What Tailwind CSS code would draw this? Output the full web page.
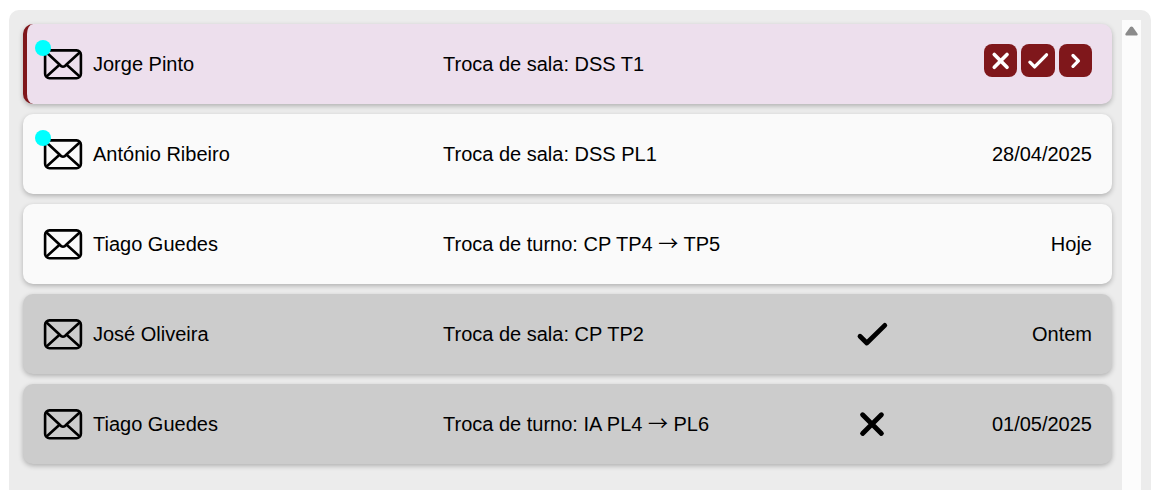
<!DOCTYPE html>
<html lang="pt">
<head>
<meta charset="utf-8">
<meta name="viewport" content="width=device-width, initial-scale=1">
<title>Notificações</title>
<script src="https://cdn.jsdelivr.net/npm/@tailwindcss/browser@4"></script>
</head>
<body class="bg-white text-black text-xl font-['Liberation_Sans',Arial,sans-serif]">
<svg class="hidden" aria-hidden="true">
  <symbol id="mail" viewBox="0 0 40 40">
    <g fill="none" stroke="currentColor" stroke-width="2.6" stroke-linejoin="round">
      <rect x="2.1" y="6.4" width="35.8" height="27.8" rx="4.4"/>
      <path d="M3 8 16.8 20.8Q20 24.6 23.2 20.8L37.2 8M3 33 16 21.2M37.2 33 24.2 21.2"/>
    </g>
  </symbol>
  <symbol id="check" viewBox="0 0 40 40">
    <path d="M8 22.2 14.8 29 32.8 11.4" fill="none" stroke="currentColor" stroke-width="4.8" stroke-linecap="round" stroke-linejoin="round"/>
  </symbol>
  <symbol id="cross" viewBox="0 0 40 40">
    <path d="M10.6 10.8 29.4 29.4M29.4 10.8 10.6 29.4" fill="none" stroke="currentColor" stroke-width="4.9" stroke-linecap="round"/>
  </symbol>
</svg>
<main class="flex h-screen flex-col overflow-hidden pt-2.5 pr-2.5 pl-[9px]">
  <section class="flex flex-1 gap-2.5 rounded-t-[10px] bg-[#ececec] pt-2.5 pr-2.5 pl-3.5">
    <ul class="flex flex-1 flex-col gap-2.5 pt-1">
      <li class="flex h-20 items-center rounded-[10px] border-l-4 border-[#7f171b] bg-[#eddfed] pr-5 pl-4 shadow-[0_2px_5px_rgba(0,0,0,0.25)]">
        <span class="relative mr-2.5"><svg class="size-10"><use href="#mail"/></svg><span class="absolute -top-1 -left-2 size-4 rounded-full bg-[#00ffff]"></span></span>
        <span class="w-[350px]">Jorge Pinto</span>
        <span class="flex-1">Troca de sala: DSS T1</span>
        <span class="mb-[7px] flex w-[108px] gap-1 text-white">
          <button type="button" aria-label="Rejeitar" class="flex h-[33px] flex-1 items-center justify-center rounded-lg bg-[#7f171b]"><svg class="size-[33px]" viewBox="0 0 33 33"><path d="M10.3 10.5 23 23.2M23 10.5 10.3 23.2" fill="none" stroke="currentColor" stroke-width="3.7" stroke-linecap="round"/></svg></button>
          <button type="button" aria-label="Aceitar" class="flex h-[33px] flex-1 items-center justify-center rounded-lg bg-[#7f171b]"><svg class="size-[33px]" viewBox="0 0 33 33"><path d="M8.9 18.2 13.6 22.9 25.5 10.8" fill="none" stroke="currentColor" stroke-width="3.3" stroke-linecap="round" stroke-linejoin="round"/></svg></button>
          <button type="button" aria-label="Abrir" class="flex h-[33px] flex-1 items-center justify-center rounded-lg bg-[#7f171b]"><svg class="size-[33px]" viewBox="0 0 33 33"><path d="M14 11.5 19.4 16.9 14 22.3" fill="none" stroke="currentColor" stroke-width="3.3" stroke-linecap="round" stroke-linejoin="round"/></svg></button>
        </span>
      </li>
      <li class="flex h-20 items-center rounded-[10px] bg-[#fafafa] px-5 shadow-[0_2px_5px_rgba(0,0,0,0.25)]">
        <span class="relative mr-2.5"><svg class="size-10"><use href="#mail"/></svg><span class="absolute -top-1 -left-2 size-4 rounded-full bg-[#00ffff]"></span></span>
        <span class="w-[350px]">António Ribeiro</span>
        <span class="flex-1">Troca de sala: DSS PL1</span>
        <time class="w-[200px] text-right">28/04/2025</time>
      </li>
      <li class="flex h-20 items-center rounded-[10px] bg-[#fafafa] px-5 shadow-[0_2px_5px_rgba(0,0,0,0.25)]">
        <svg class="mr-2.5 size-10"><use href="#mail"/></svg>
        <span class="w-[350px]">Tiago Guedes</span>
        <span class="flex-1">Troca de turno: CP TP4 <span class="leading-none font-['Noto_Sans_CJK_JP',sans-serif]">→</span> TP5</span>
        <time class="w-[200px] text-right">Hoje</time>
      </li>
      <li class="flex h-20 items-center rounded-[10px] bg-[#cccccc] px-5 shadow-[0_2px_5px_rgba(0,0,0,0.25)]">
        <svg class="mr-2.5 size-10"><use href="#mail"/></svg>
        <span class="w-[350px]">José Oliveira</span>
        <span class="flex-1">Troca de sala: CP TP2</span>
        <svg class="size-10" role="img" aria-label="Aceite"><use href="#check"/></svg>
        <time class="w-[200px] text-right">Ontem</time>
      </li>
      <li class="flex h-20 items-center rounded-[10px] bg-[#cccccc] px-5 shadow-[0_2px_5px_rgba(0,0,0,0.25)]">
        <svg class="mr-2.5 size-10"><use href="#mail"/></svg>
        <span class="w-[350px]">Tiago Guedes</span>
        <span class="flex-1">Troca de turno: IA PL4 <span class="leading-none font-['Noto_Sans_CJK_JP',sans-serif]">→</span> PL6</span>
        <svg class="size-10" role="img" aria-label="Rejeitado"><use href="#cross"/></svg>
        <time class="w-[200px] text-right">01/05/2025</time>
      </li>
    </ul>
    <div class="flex w-[19px] flex-col items-center bg-[#fcfcfc] pt-1.5">
      <svg class="h-2.5 w-[13px]" viewBox="0 0 13 10"><path d="M5.2 1Q6.5-.2 7.8 1L12.4 7.5Q13.2 9.5 11.6 9.6H1.4Q-.2 9.5.6 7.5Z" fill="#8b8b8b"/></svg>
    </div>
  </section>
</main>
</body>
</html>
